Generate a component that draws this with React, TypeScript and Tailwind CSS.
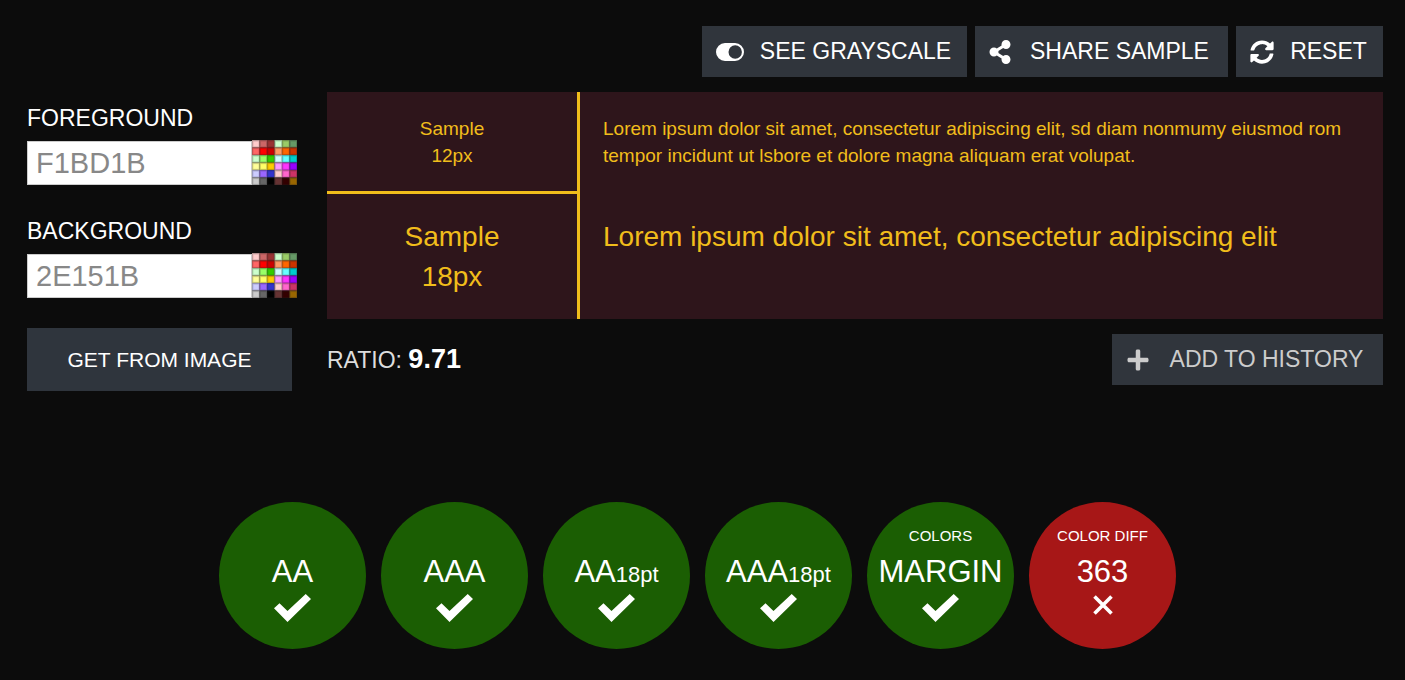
import { useState } from "react";
import type { ReactNode } from "react";
import { FaPlus, FaShareAlt, FaSyncAlt } from "react-icons/fa";

const PALETTE = [
  ["#ffcccc", "#cc6666", "#993333", "#ccffcc", "#99cc66", "#669966"],
  ["#ff6666", "#ff0000", "#cc0000", "#ff9966", "#ff6600", "#cc3300"],
  ["#ccffcc", "#99ff66", "#33cc00", "#ccffff", "#66ffff", "#00cccc"],
  ["#ffff99", "#ffff66", "#ffcc00", "#ff99ff", "#ff33ff", "#9900ff"],
  ["#ccccff", "#9966ff", "#3333cc", "#ffcccc", "#ff66cc", "#cc3366"],
  ["#cccccc", "#666666", "#000000", "#663333", "#330000", "#996600"],
];

function Swatches() {
  return (
    <svg viewBox="0 0 45 45" className="block size-full" aria-hidden="true">
      <rect width="45" height="45" fill="#222" />
      {PALETTE.map((row, y) =>
        row.map((fill, x) => (
          <g key={`${x}-${y}`}>
            <rect x={x * 7.5} y={y * 7.5} width="7.5" height="7.5" fill={fill} opacity="0.65" />
            <rect x={x * 7.5 + 0.7} y={y * 7.5 + 0.9} width="6.4" height="6" fill={fill} opacity="0.6" />
            <rect x={x * 7.5 + 1.5} y={y * 7.5 + 1.7} width="5" height="4.6" fill={fill} />
          </g>
        )),
      )}
    </svg>
  );
}

function ColorField({ id, label, initial }: { id: string; label: string; initial: string }) {
  const [value, setValue] = useState(initial);
  return (
    <div>
      <label htmlFor={id} className="block h-8 text-[23px] leading-5 text-white">
        {label}
      </label>
      <div className="flex items-end">
        <input
          id={id}
          value={value}
          onChange={(e) => setValue(e.target.value)}
          className="h-11 w-[225px] rounded-none border border-[#ccc] bg-white px-2 text-[29px] text-[#888] outline-none"
        />
        <button type="button" aria-label={`Pick ${label.toLowerCase()} color`} className="h-[45px] w-[45px]">
          <Swatches />
        </button>
      </div>
    </div>
  );
}

function ToggleIcon() {
  return (
    <svg viewBox="0 0 28 18" className="h-[18px] w-7" fill="currentColor" aria-hidden="true">
      <path
        fillRule="evenodd"
        d="M9 0H19A9 9 0 0 1 19 18H9A9 9 0 0 1 9 0ZM19.2 2.3A6.7 6.7 0 1 0 19.2 15.7A6.7 6.7 0 1 0 19.2 2.3Z"
      />
    </svg>
  );
}

function ToolButton({
  icon,
  width,
  muted,
  children,
}: {
  icon: ReactNode;
  width: string;
  muted?: boolean;
  children: ReactNode;
}) {
  return (
    <button
      type="button"
      className={`flex h-[51px] items-center gap-3.5 bg-[#30353c] px-3.5 text-[23px] whitespace-nowrap ${width} ${
        muted ? "text-[#ccc]" : "text-white"
      }`}
    >
      {icon}
      <span className="flex-1 text-center">{children}</span>
    </button>
  );
}

function Check() {
  return (
    <svg viewBox="0 0 37 28" className="h-7 w-[37px]" fill="#fff" aria-hidden="true">
      <path d="M0 14.3 5.5 9.3 13.5 17 31.7 0 37 4.9 13.5 28Z" />
    </svg>
  );
}

function Cross() {
  return (
    <svg viewBox="0 0 20 20" className="mt-px h-5 w-5" stroke="#fff" strokeWidth="3.6" aria-hidden="true">
      <path d="M1.5 1.5 18.5 18.5M18.5 1.5 1.5 18.5" />
    </svg>
  );
}

type Result = { title: string; suffix?: string; caption?: string; pass: boolean };

const RESULTS: Result[] = [
  { title: "AA", pass: true },
  { title: "AAA", pass: true },
  { title: "AA", suffix: "18pt", pass: true },
  { title: "AAA", suffix: "18pt", pass: true },
  { title: "MARGIN", caption: "COLORS", pass: true },
  { title: "363", caption: "COLOR DIFF", pass: false },
];

function Badge({ title, suffix, caption, pass }: Result) {
  return (
    <li
      className={`mr-[15px] flex size-[147px] flex-col items-center rounded-full pt-6 text-white ${
        pass ? "bg-[#1b5e03]" : "bg-[#a71717]"
      }`}
    >
      <span className="h-5 text-[15px] leading-5">{caption}</span>
      <span className="mt-1.5 h-10 text-[31px] leading-10 whitespace-nowrap">
        {title}
        {suffix && <span className="text-[22px]">{suffix}</span>}
      </span>
      <span className="mt-0.5">{pass ? <Check /> : <Cross />}</span>
    </li>
  );
}

export default function App() {
  return (
    <div className="min-h-screen bg-[#0c0c0c] pt-[26px] pr-[22px] pb-[31px] pl-[27px] font-['Liberation_Sans',Arial,sans-serif]">
      <header className="flex justify-end gap-2">
        <ToolButton width="min-w-[265px]" icon={<ToggleIcon />}>
          SEE GRAYSCALE
        </ToolButton>
        <ToolButton width="min-w-[253px]" icon={<FaShareAlt className="h-6 w-[22px]" />}>
          SHARE SAMPLE
        </ToolButton>
        <ToolButton width="min-w-[147px]" icon={<FaSyncAlt className="size-6" />}>
          RESET
        </ToolButton>
      </header>

      <main>
        <div className="mt-[15px] flex gap-[30px]">
          <section className="w-[270px] shrink-0 pt-4">
            <div className="flex flex-col gap-9">
              <ColorField id="foreground" label="FOREGROUND" initial="F1BD1B" />
              <ColorField id="background" label="BACKGROUND" initial="2E151B" />
            </div>
            <button type="button" className="mt-[30px] h-[63px] w-[265px] bg-[#2f353d] text-[21px] text-white">
              GET FROM IMAGE
            </button>
          </section>

          <section className="min-w-0 flex-1">
            <div className="grid grid-cols-[253px_1fr] grid-rows-[102px_125px] bg-[#2e151b] text-[#f1bd1b]">
              <div className="border-r-[3px] border-b-[3px] border-[#f1bd1b] pt-[23px] text-center text-[19px] leading-[27px]">
                Sample
                <br />
                12px
              </div>
              <p className="px-[23px] pt-[23px] text-[19px] leading-[27px]">
                Lorem ipsum dolor sit amet, consectetur adipiscing elit, sd diam nonmumy eiusmod rom
                <br />
                tempor incidunt ut lsbore et dolore magna aliquam erat volupat.
              </p>
              <div className="border-r-[3px] border-[#f1bd1b] pt-[23px] text-center text-[28px] leading-10">
                Sample
                <br />
                18px
              </div>
              <p className="px-[23px] pt-[23px] text-[28px] leading-10">
                Lorem ipsum dolor sit amet, consectetur adipiscing elit
              </p>
            </div>
            <div className="mt-[15px] flex items-center justify-between">
              <p className="text-[23px] text-[#ddd]">
                RATIO: <strong className="text-[27px] text-white">9.71</strong>
              </p>
              <ToolButton muted width="min-w-[271px]" icon={<FaPlus className="size-6" />}>
                ADD TO HISTORY
              </ToolButton>
            </div>
          </section>
        </div>

        <ul className="mt-[111px] flex justify-center">
          {RESULTS.map((r) => (
            <Badge key={r.title + (r.suffix ?? "")} {...r} />
          ))}
        </ul>
      </main>
    </div>
  );
}
